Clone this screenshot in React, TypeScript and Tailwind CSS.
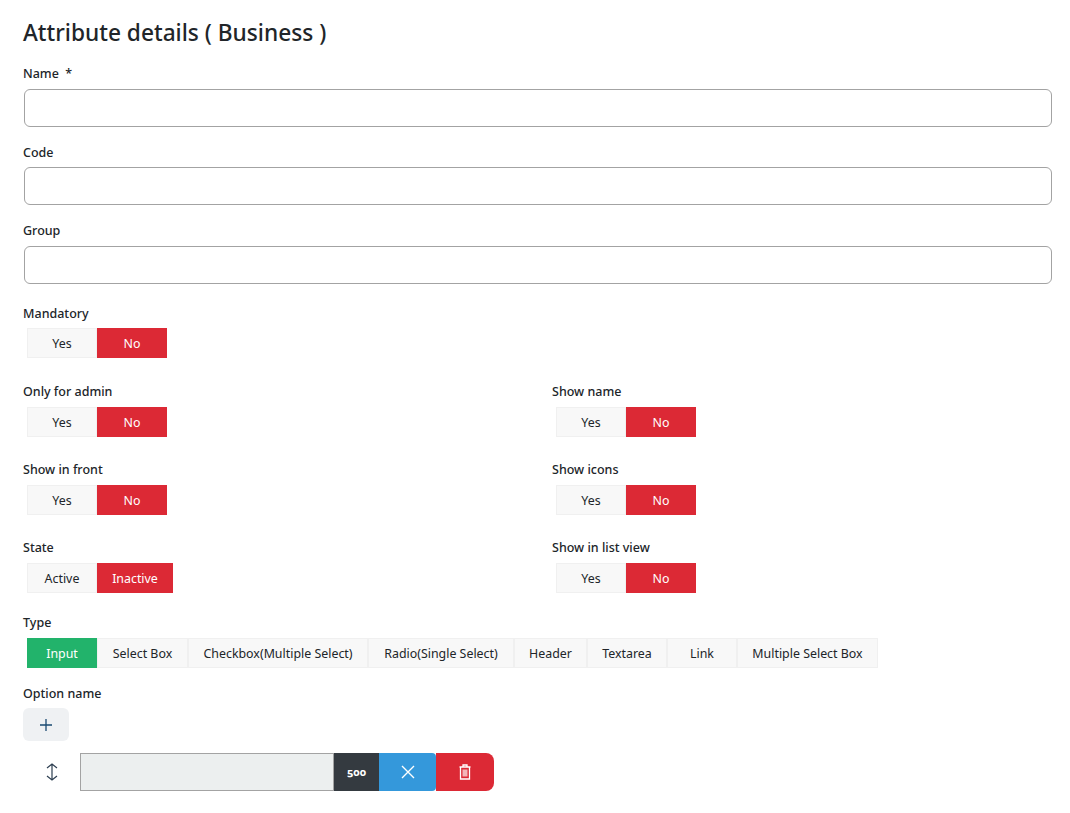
const TYPES = [
  { label: "Input", width: "w-[70px]" },
  { label: "Select Box", width: "w-[91px]" },
  { label: "Checkbox(Multiple Select)", width: "w-[180px]" },
  { label: "Radio(Single Select)", width: "w-[146px]" },
  { label: "Header", width: "w-[73px]" },
  { label: "Textarea", width: "w-[80px]" },
  { label: "Link", width: "w-[70px]" },
  { label: "Multiple Select Box", width: "w-[141px]" },
];

function Label({ children }: { children: React.ReactNode }) {
  return <div className="h-[19px] text-[12.5px] leading-[19px] font-medium text-[#212529]">{children}</div>;
}

function TextField({ label, gap }: { label: React.ReactNode; gap: string }) {
  return (
    <div>
      <Label>{label}</Label>
      <input className={`block h-[38px] w-[1028px] ml-px rounded-[6px] border border-[#a3a3a3] bg-white ${gap}`} />
    </div>
  );
}

function Toggle({ label, on = "Yes", off = "No", wide = false, gap = "mt-[6px]" }: { label: string; on?: string; off?: string; wide?: boolean; gap?: string }) {
  return (
    <div>
      <Label>{label}</Label>
      <div className={`ml-1 flex h-[30px] text-[12.4px] ${gap}`}>
        <div className="flex w-[70px] items-center justify-center border border-[#f0f0f0] bg-[#f8f8f8] pt-[2px] text-[#212529]">{on}</div>
        <div className={`flex items-center justify-center bg-[#dc2935] pt-[2px] text-white ${wide ? "w-[76px]" : "w-[70px]"}`}>{off}</div>
      </div>
    </div>
  );
}

export default function App() {
  return (
    <div className="min-h-[813px] bg-white pl-[23px] pt-[17px] font-['Noto_Sans','Open_Sans',sans-serif]">
      <h1 className="h-[32px] text-[22.7px] leading-[32px] font-medium text-[#212529]">Attribute details ( Business )</h1>

      <div className="mt-[15px] flex flex-col gap-[16px]">
        <TextField label={<>Name&nbsp; *</>} gap="mt-[6px]" />
        <TextField label="Code" gap="mt-[5px]" />
        <TextField label="Group" gap="mt-[6px]" />
      </div>

      <div className="mt-[20px]">
        <Toggle label="Mandatory" gap="mt-[5px]" />
      </div>

      <div className="mt-[24px] grid w-[1028px] grid-cols-2 gap-x-[30px] gap-y-[23px]">
        <Toggle label="Only for admin" />
        <Toggle label="Show name" />
        <Toggle label="Show in front" />
        <Toggle label="Show icons" />
        <Toggle label="State" on="Active" off="Inactive" wide />
        <Toggle label="Show in list view" />
      </div>

      <div className="mt-[20px]">
        <Label>Type</Label>
        <div className="mt-[6px] ml-1 flex h-[30px] text-[12.4px]">
          {TYPES.map((t, i) => (
            <div
              key={t.label}
              className={`flex items-center justify-center pt-[2px] ${t.width} ${
                i === 0 ? "bg-[#22b36b] text-white" : "border border-[#f0f0f0] bg-[#f8f8f8] text-[#212529]"
              }`}
            >
              {t.label}
            </div>
          ))}
        </div>
      </div>

      <div className="mt-[16px]">
        <Label>Option name</Label>
        <button className="mt-[5px] flex h-[33px] w-[46px] items-center justify-center rounded-[6px] bg-[#eff1f3]">
          <svg width="14" height="14" viewBox="0 0 14 14" fill="none" stroke="#1a4a72" strokeWidth="1.3">
            <path d="M7 1v12M1 7h12" />
          </svg>
        </button>
        <div className="mt-[12px] flex h-[38px] items-center">
          <div className="flex w-[57px] justify-center">
            <svg width="14" height="18" viewBox="0 0 14 18" fill="none" stroke="#2c3e50" strokeWidth="1.2">
              <path d="M2 5 7 1l5 4M2 13l5 4 5-4M7 1v16" />
            </svg>
          </div>
          <div className="h-full w-[254px] border border-[#a3a3a3] bg-[#ecefef]" />
          <div className="flex h-full w-[45px] items-center justify-center bg-[#343a40] font-['Open_Sans',sans-serif] text-[11px] font-bold text-white [font-variant-numeric:oldstyle-nums]">500</div>
          <div className="flex h-full w-[57px] items-center justify-center rounded-r-[4px] bg-[#3498db]">
            <svg width="14" height="14" viewBox="0 0 14 14" fill="none" stroke="#fff" strokeWidth="1.4">
              <path d="m1 1 12 12M13 1 1 13" />
            </svg>
          </div>
          <div className="flex h-full w-[58px] items-center justify-center rounded-r-[8px] bg-[#dc2935]">
            <svg width="12" height="16" viewBox="0 0 12 16" fill="none" stroke="#fff" strokeWidth="1.3">
              <path d="M.5 3h11M4 3V1h4v2M1.5 3v12h9V3" />
              <path d="M3.5 5.5h5v7h-5z" fill="#fff" fillOpacity="0.65" stroke="none" />
            </svg>
          </div>
        </div>
      </div>
    </div>
  );
}
